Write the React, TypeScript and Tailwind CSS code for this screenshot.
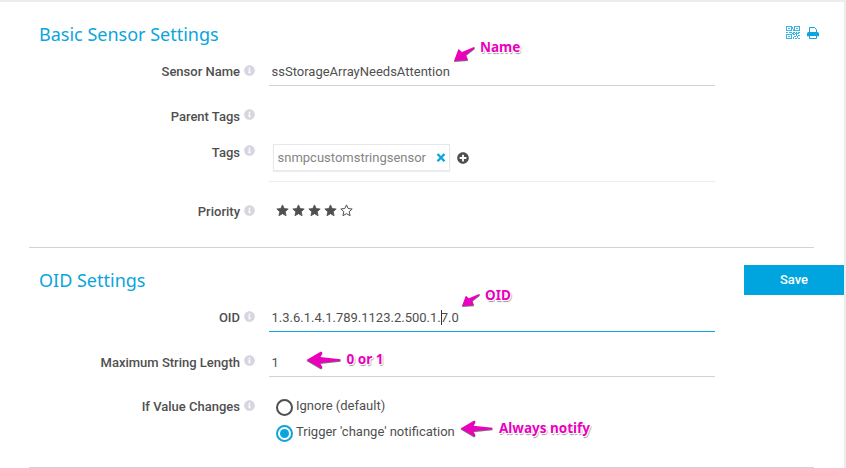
import React from "react";
import { FaInfoCircle, FaPlusCircle } from "react-icons/fa";

function Row({ label, className, labelHeight = "h-[27px]", iconOffset = "-mt-[3px]", children }: { label: string; className: string; labelHeight?: string; iconOffset?: string; children?: React.ReactNode }) {
  return (
    <div className={`flex items-start ${className}`}>
      <div className={`flex w-[255px] shrink-0 items-center justify-end gap-1 font-medium ${labelHeight}`}>
        <span className="whitespace-nowrap">{label}</span>
        <FaInfoCircle className={`size-[11px] text-[#d5d6df] ${iconOffset}`} />
      </div>
      <div className="ml-[14px] h-full w-[446px]">{children}</div>
    </div>
  );
}

function Field({ className, children }: { className: string; children: React.ReactNode }) {
  return <div className={`flex h-full items-center border-b pl-[2.5px] ${className}`}>{children}</div>;
}

function Heading({ children }: { children: React.ReactNode }) {
  return <h2 className="ml-[39px] h-8 font-['Noto_Sans',sans-serif] text-[18px] leading-8 text-[#0aa5dc]">{children}</h2>;
}

function Star({ filled = false }: { filled?: boolean }) {
  return (
    <svg className="size-[13px]" viewBox="0 0 13 13" fill={filled ? "currentColor" : "none"} stroke="currentColor" strokeWidth={filled ? 0.8 : 1}>
      <path d="M6.5 .9 8.2 4.5 12.2 5 9.2 7.7 10.1 11.7 6.5 9.7 2.9 11.7 3.8 7.7.8 5 4.8 4.5z" />
    </svg>
  );
}

function QrIcon() {
  return (
    <svg width="14" height="14" viewBox="0 0 14 14" fill="#39b4e2" shapeRendering="crispEdges">
      <path fillRule="evenodd" d="M0 0h6v5H0zM1 1v3h4V1zM8 0h6v5H8zM9 1v3h4V1zM0 8h6v5H0zM1 9v3h4V9z" />
      <path d="M2 2h2v1H2zM10 2h2v1h-2zM2 10h2v1H2zM6 1h1v2H6zM7 3h1v2H7zM0 6h2v1H0zM3 6h3v1H3zM7 6h2v1H7zM10 6h1v1h-1zM12 6h2v1h-2zM6 7h2v1H6zM9 7h4v1H9zM7 8h2v1H7zM10 8h1v2h-1zM12 9h2v1h-2zM8 10h2v1H8zM11 10h1v2h-1zM7 11h1v2H7zM9 12h2v1H9zM12 12h2v1h-2z" />
    </svg>
  );
}

function PrintIcon() {
  return (
    <svg width="12" height="12" viewBox="0 0 12 12" fill="none" stroke="#0aa5dc">
      <path d="M2.5 6V.5h5l2 2.2V6" />
      <path d="M0 6.6Q0 5 1.7 5h8.6Q12 5 12 6.6V9.3H0z" fill="#0aa5dc" stroke="none" />
      <path d="M2.5 8.5h7v3h-7z" fill="white" />
    </svg>
  );
}

function Note({ className, children }: { className: string; children: React.ReactNode }) {
  return (
    <span className={`absolute whitespace-nowrap font-['Noto_Sans',sans-serif] text-[13.5px] leading-5 font-bold text-[#ea00bd] [text-shadow:-1px_-1px_0_#fff,1px_-1px_0_#fff,-1px_1px_0_#fff,1px_1px_0_#fff,0_1px_0_#fff,1px_2px_1px_#999,2px_1px_1px_#ccc] ${className}`}>
      {children}
    </span>
  );
}

function Arrow({ className, small = false }: { className: string; small?: boolean }) {
  return (
    <svg className={`absolute overflow-visible [filter:drop-shadow(0.5px_1px_0.5px_#777)] ${className}`} viewBox={small ? "0 0 21 14" : "0 0 34 16"} fill="#ea00bd">
      <path d={small ? "M0 14 4.5 2 8 5 20 0 21 1 12 8 14 13z" : "M0 8 14.5-.5 16 .8 13.5 5 34 7.2 34 8.8 13.5 11 16 15.2 14.5 16.5z"} />
    </svg>
  );
}

export default function App() {
  return (
    <main className="relative h-[468px] w-[846px] overflow-hidden border-t-2 border-r-2 border-[#ececec] bg-white font-[Roboto,sans-serif] text-[13px] text-[#4f4f4f]">
      <header className="flex justify-between pt-4 pr-[25px]">
        <Heading>Basic Sensor Settings</Heading>
        <div className="flex h-[29px] items-center gap-[7px]">
          <QrIcon />
          <PrintIcon />
        </div>
      </header>
      <Row label="Sensor Name" className="mt-2 h-7">
        <Field className="border-[#d2d2da]">ssStorageArrayNeedsAttention</Field>
      </Row>
      <Row label="Parent Tags" className="mt-[17px] h-7" iconOffset="-mt-[5px]" />
      <Row label="Tags" className="mt-[13px] h-[38px]" labelHeight="h-[17px]" iconOffset="-mt-[5px]">
        <div className="flex h-full items-start border-b border-[#ececef] pl-1">
          <div className="flex h-[27px] w-[177px] items-center justify-between border border-[#e8e8ec] pr-[3px] pl-[3.5px] text-[#858585] shadow-[0_1px_1px_#eee]">
            <span>snmpcustomstringsensor</span>
            <svg width="10" height="9" viewBox="0 0 10 9" stroke="#0aa5dc" strokeWidth="2.3"><path d="m1.5 1 7 7.2m0-7.2-7 7.2" /></svg>
          </div>
          <FaPlusCircle className="mt-2 ml-[6.5px] size-[12px]" />
        </div>
      </Row>
      <Row label="Priority" className="mt-4 h-[27px]">
        <div className="flex h-[25px] items-center gap-[3px] pl-[7px]">
          {[1, 2, 3, 4].map((n) => <Star key={n} filled />)}
          <Star />
        </div>
      </Row>
      <hr className="mt-[22px] ml-[29px] w-[785px] border-[#d2d2da]" />
      <div className="mt-4 flex h-[31px] items-start justify-between">
        <Heading>OID Settings</Heading>
        <button className="mt-px h-[30px] w-[100px] bg-[#00a5e0] font-medium text-white">Save</button>
      </div>
      <Row label="OID" className="mt-[9px] h-7">
        <Field className="border-[#0aa5dc]">
          <span>1.3.6.1.4.1.789.1123.2.500.1.</span>
          <i className="-mr-px h-[15px] w-px bg-[#333]" />
          <span>7.0</span>
        </Field>
      </Row>
      <Row label="Maximum String Length" className="mt-[17px] h-7" iconOffset="-mt-[5px]">
        <Field className="border-[#d2d2da]">1</Field>
      </Row>
      <Row label="If Value Changes" className="mt-[17px] h-[52px]" labelHeight="h-[25px]">
        <div className="pl-[7px]">
          <div className="flex h-[26px] items-center gap-[3px]">
            <span className="size-[17px] rounded-full border-2 border-[#4f4f4f]" />
            <span className="-mt-[3px]">Ignore (default)</span>
          </div>
          <div className="flex h-[26px] items-center gap-[3px]">
            <span className="flex size-[17px] items-center justify-center rounded-full border-2 border-[#0aa5dc]">
              <span className="size-[9px] rounded-full bg-[#0aa5dc]" />
            </span>
            <span className="-mt-[3px]">Trigger 'change' notification</span>
          </div>
        </div>
      </Row>
      <hr className="mt-[21px] ml-[29px] w-[785px] border-[#d2d2da]" />

      <Arrow small className="top-[45px] left-[454px] h-[14px] w-[21px]" />
      <Note className="top-[35px] left-[480px]">Name</Note>
      <Arrow small className="top-[292px] left-[462px] h-[12px] w-[18px]" />
      <Note className="top-[283px] left-[485px]">OID</Note>
      <Arrow className="top-[350px] left-[306px] h-[16px] w-[35px]" />
      <Note className="top-[347px] left-[346.5px]">0 or 1</Note>
      <Arrow className="top-[419px] left-[460px] h-[15px] w-[33px]" />
      <Note className="top-[416px] left-[499px]">Always notify</Note>
    </main>
  );
}
